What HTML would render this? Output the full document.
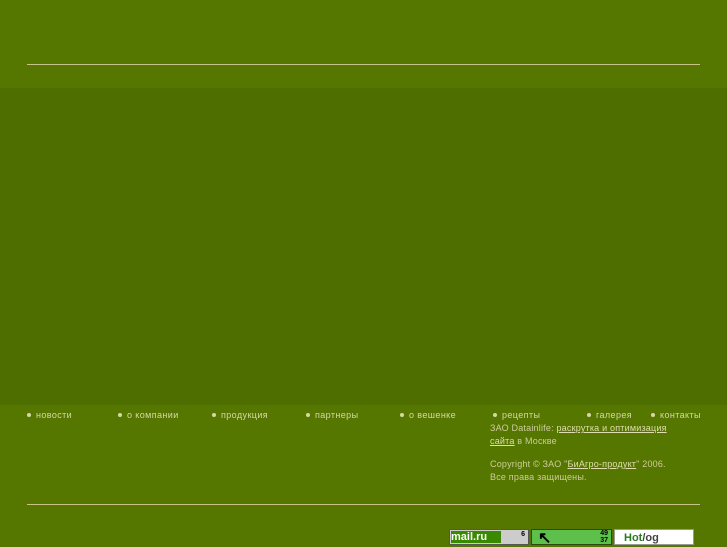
<!DOCTYPE html>
<html><head><meta charset="utf-8"><style>
html,body{margin:0;}
body{width:727px;height:545px;background:#557700;position:relative;overflow:hidden;font-family:"Liberation Sans",sans-serif;}
.line{position:absolute;left:27px;width:673px;height:1px;background:#c9c38a;}
.band{position:absolute;left:0;top:88px;width:727px;height:317px;background:#4e6e00;}
.nav{position:absolute;top:410px;font-size:9px;color:#d8d6a8;letter-spacing:0.4px;white-space:nowrap;}
.nav:before{content:"";display:inline-block;width:4px;height:4px;border-radius:2px;background:#d8d6a8;margin-right:5px;vertical-align:1px;}
.t{position:absolute;left:490px;font-size:9px;color:#cfcc9c;line-height:13px;letter-spacing:0.2px;white-space:nowrap;}
.t u{color:#e0dcae;}
</style></head><body>
<div class="line" style="top:64px"></div>
<div class="band"></div>
<div class="nav" style="left:27px">новости</div>
<div class="nav" style="left:118px">о компании</div>
<div class="nav" style="left:212px">продукция</div>
<div class="nav" style="left:306px">партнеры</div>
<div class="nav" style="left:400px">о вешенке</div>
<div class="nav" style="left:493px">рецепты</div>
<div class="nav" style="left:587px">галерея</div>
<div class="nav" style="left:651px">контакты</div>
<div class="t" style="top:422px">ЗАО Datainlife: <u>раскрутка и оптимизация</u></div>
<div class="t" style="top:435px"><u>сайта</u> в Москве</div>
<div class="t" style="top:458px">Copyright © ЗАО "<u>БиАгро-продукт</u>" 2006.</div>
<div class="t" style="top:471px">Все права защищены.</div>
<div class="line" style="top:504px"></div>
<div style="position:absolute;left:449px;top:529px;width:80px;height:16px;background:#ccc;border:1px solid #555;box-sizing:border-box">
<div style="position:absolute;left:1px;top:1px;width:50px;height:12px;background:#3a8a00;color:#fff;font-weight:bold;font-size:11px;line-height:12px">mail.ru</div>
<div style="position:absolute;right:3px;top:1px;font-size:7px;font-weight:bold">6</div></div>
<div style="position:absolute;left:531px;top:529px;width:81px;height:16px;background:#5cc04a;border:1px solid #2a4a10;box-sizing:border-box">
<div style="position:absolute;left:6px;top:2px;font-size:16px;font-weight:bold;line-height:14px">↖</div>
<div style="position:absolute;right:3px;top:0;font-size:7px;font-weight:bold;line-height:7px">49<br>37</div></div>
<div style="position:absolute;left:614px;top:529px;width:80px;height:16px;background:#fff;border:1px solid #999;box-sizing:border-box;font-size:11px;font-weight:bold;color:#2a7a20;padding-left:9px;line-height:16px">Hot<span style="color:#444">/og</span></div>
</body></html>
